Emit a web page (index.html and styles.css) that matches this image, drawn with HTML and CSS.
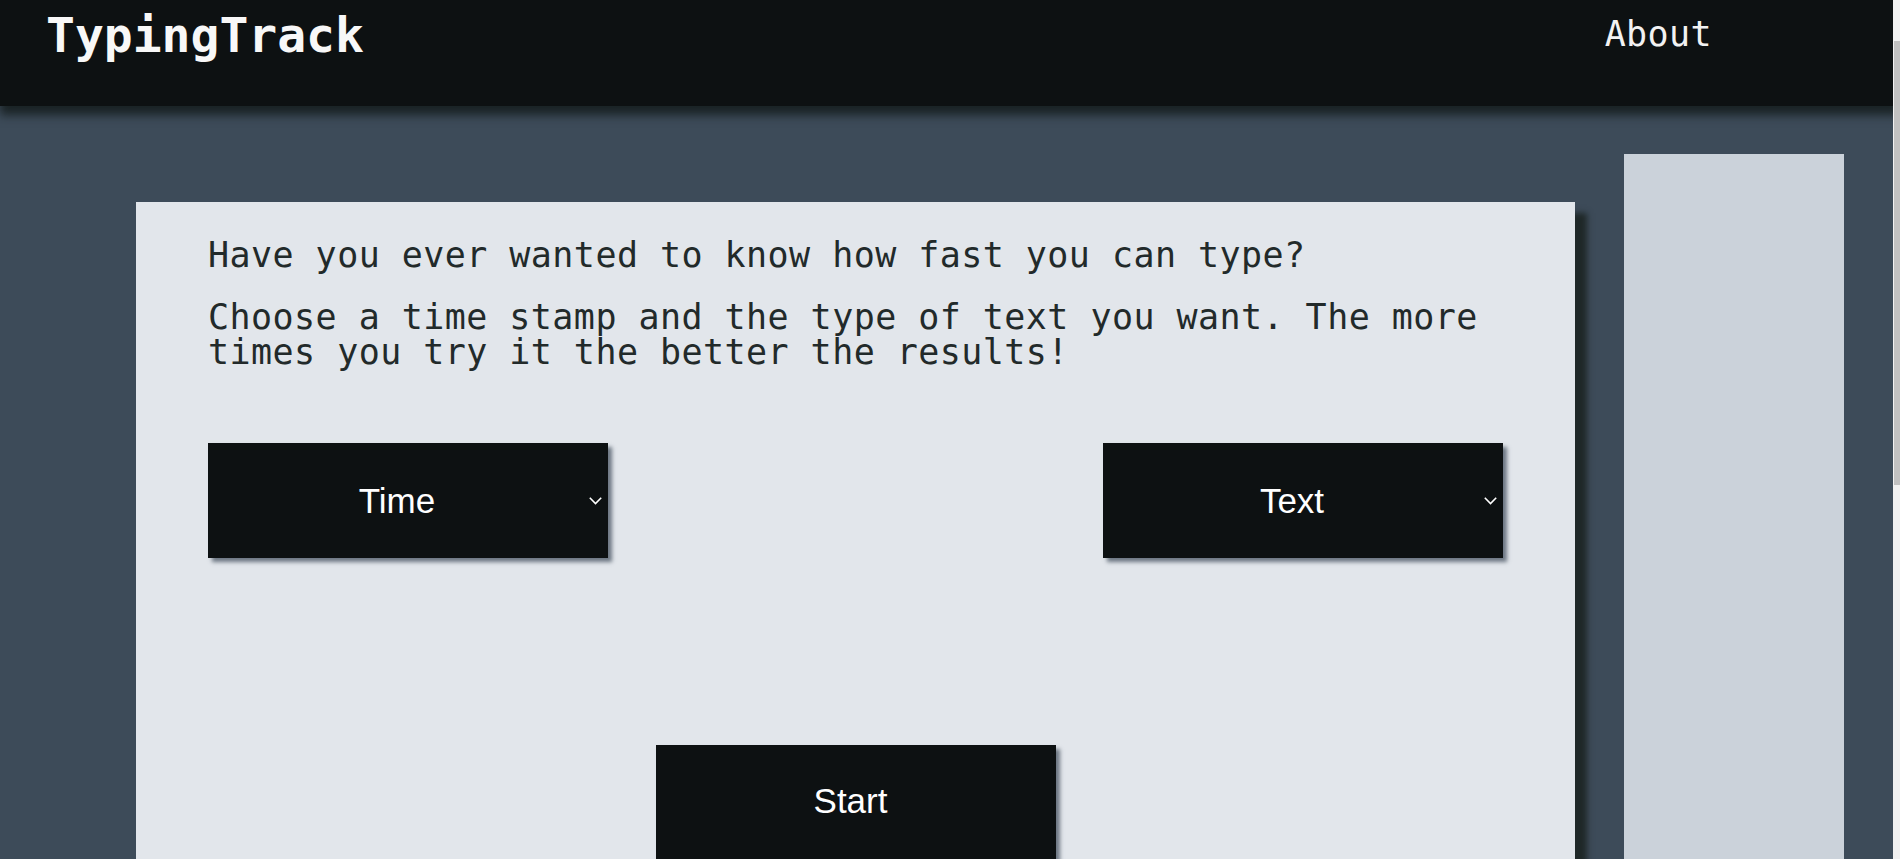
FILE: index.html
```html
<!DOCTYPE html>
<html lang="en">
<head>
<meta charset="utf-8">
<title>TypingTrack</title>
<link rel="stylesheet" href="styles.css">
</head>
<body>
<header class="topbar">
  <div class="logo">TypingTrack</div>
  <nav class="nav"><a class="nav-link" href="#">About</a></nav>
</header>
<main class="layout">
  <section class="card">
    <p class="intro">Have you ever wanted to know how fast you can type?</p>
    <p class="intro">Choose a time stamp and the type of text you want. The more times you try it the better the results!</p>
    <div class="options">
      <div class="select">
        <span class="select-label">Time</span>
        <span class="chev"><svg width="13" height="8" viewBox="0 0 13 8"><polyline points="0.8,0.8 6.5,6.5 12.2,0.8" fill="none" stroke="#ffffff" stroke-width="1.6"/></svg></span>
      </div>
      <div class="select">
        <span class="select-label">Text</span>
        <span class="chev"><svg width="13" height="8" viewBox="0 0 13 8"><polyline points="0.8,0.8 6.5,6.5 12.2,0.8" fill="none" stroke="#ffffff" stroke-width="1.6"/></svg></span>
      </div>
    </div>
    <div class="start-row">
      <button class="start">Start</button>
    </div>
  </section>
  <aside class="sidebar"></aside>
</main>
<div class="scrollbar" aria-hidden="true"><div class="scroll-thumb"></div></div>
</body>
</html>
```

FILE: styles.css
```css
html, body {
  margin: 0;
  padding: 0;
}
body {
  background: #3d4b59;
  font-family: "DejaVu Sans Mono", monospace;
}
.topbar {
  position: relative;
  z-index: 2;
  height: 106px;
  background: #0d1112;
  box-shadow: 0 9px 9px rgba(20, 28, 28, 0.85);
  display: flex;
  justify-content: space-between;
  align-items: flex-start;
  padding: 0 188px 0 46px;
}
.logo {
  color: #f8f8f8;
  font-weight: bold;
  font-size: 48px;
  line-height: normal;
  padding-top: 7px;
}
.nav {
  padding-top: 14px;
}
.nav-link {
  color: #f2f2f2;
  text-decoration: none;
  font-size: 35px;
  letter-spacing: 0.4px;
  line-height: normal;
}
.layout {
  display: flex;
  align-items: flex-start;
  padding-left: 136px;
  padding-bottom: 40px;
}
.card {
  width: 1439px;
  box-sizing: border-box;
  margin-top: 96px;
  background: #e2e6eb;
  box-shadow: 12px 11px 6px #1f2828;
  padding: 36px 72px 640px 72px;
}
.intro {
  margin: 0 0 27px 0;
  color: #222a2a;
  font-size: 35px;
  line-height: 35px;
  letter-spacing: 0.45px;
}
.intro + .intro {
  margin-bottom: 0;
}
.options {
  display: flex;
  justify-content: space-between;
  margin-top: 73px;
}
.select {
  width: 400px;
  height: 115px;
  background: #0d1112;
  box-shadow: 4px 4px 4px rgba(70, 82, 96, 0.75);
  display: flex;
  align-items: center;
  color: #ffffff;
  font-family: "Liberation Sans", Arial, sans-serif;
  font-size: 35px;
}
.select-label {
  flex: 1;
  text-align: center;
}
.chev {
  width: 18px;
  margin-right: 4px;
  display: flex;
  justify-content: center;
}
.start-row {
  display: flex;
  justify-content: center;
  margin-top: 187px;
}
.start {
  width: 400px;
  height: 115px;
  border: none;
  background: #0d1112;
  color: #ffffff;
  font-family: "Liberation Sans", Arial, sans-serif;
  font-size: 35px;
  padding: 0 10px 4px 0;
  box-shadow: 4px 4px 4px rgba(70, 82, 96, 0.75);
}
.sidebar {
  width: 220px;
  height: 1300px;
  margin-top: 48px;
  margin-left: 49px;
  background: #cbd2da;
}
.scrollbar {
  position: fixed;
  top: 0;
  right: 0;
  width: 7px;
  height: 100vh;
  background: #f1f1f1;
  z-index: 5;
}
.scroll-thumb {
  margin-top: 41px;
  margin-left: 1px;
  height: 444px;
  background: #c1c1c1;
}
```
